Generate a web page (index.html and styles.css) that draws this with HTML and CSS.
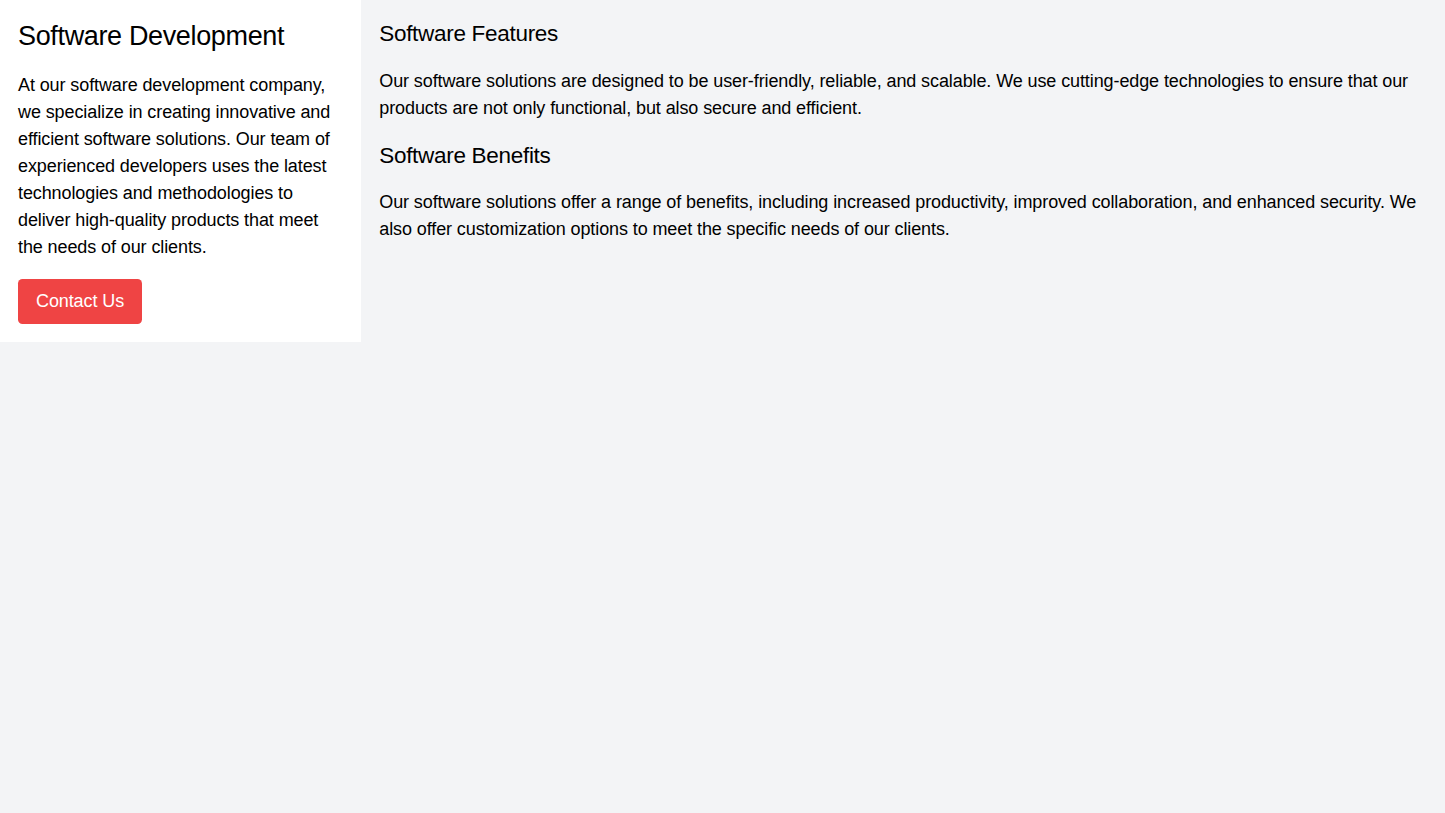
FILE: index.html
```html
<!DOCTYPE html>
<html lang="en">
<head>
    <meta charset="UTF-8">
    <meta name="viewport" content="width=device-width, initial-scale=1.0">
    <title>Software Development</title>
    <link rel="stylesheet" href="styles.css">
</head>
<body>
    <div class="page">
        <!-- Sidebar -->
        <aside class="sidebar">
            <h1 class="sidebar-title">Software Development</h1>
            <p class="text">At our software development company, we specialize in creating innovative and efficient software solutions. Our team of experienced developers uses the latest technologies and methodologies to deliver high-quality products that meet the needs of our clients.</p>
            <button class="contact-btn">Contact Us</button>
        </aside>

        <!-- Main content -->
        <main class="content">
            <h2 class="section-title">Software Features</h2>
            <p class="text">Our software solutions are designed to be user-friendly, reliable, and scalable. We use cutting-edge technologies to ensure that our products are not only functional, but also secure and efficient.</p>
            <h2 class="section-title">Software Benefits</h2>
            <p class="text">Our software solutions offer a range of benefits, including increased productivity, improved collaboration, and enhanced security. We also offer customization options to meet the specific needs of our clients.</p>
        </main>
    </div>
</body>
</html>
```
FILE: styles.css
```css
html {
    font-size: 18px;
}
body {
    margin: 0;
    background-color: #f3f4f6;
    color: #000;
    font-family: "Liberation Sans", Arial, sans-serif;
    line-height: 1.5;
    letter-spacing: -0.1px;
    min-height: 100vh;
}
.page {
    display: flex;
    align-items: flex-start;
}
.sidebar {
    width: 25%;
    background: #fff;
    padding: 1rem;
    box-sizing: border-box;
}
.sidebar-title {
    font-size: 1.5rem;
    line-height: 2rem;
    font-weight: normal;
    letter-spacing: -0.35px;
    margin: 0 0 1rem;
}
.text {
    margin: 0 0 1rem;
    font-size: 1rem;
    line-height: 27px;
}
.contact-btn {
    display: block;
    background-color: #ef4444;
    color: #fff;
    border: none;
    border-radius: 0.25rem;
    padding: 0.5rem 1rem;
    font-family: inherit;
    font-size: 1rem;
    line-height: 27px;
    letter-spacing: -0.1px;
    cursor: pointer;
}
.content {
    flex: 1;
    padding: 1rem;
}
.section-title {
    font-size: 1.25rem;
    line-height: 1.75rem;
    font-weight: normal;
    letter-spacing: -0.3px;
    margin: 0 0 1rem;
}
```
